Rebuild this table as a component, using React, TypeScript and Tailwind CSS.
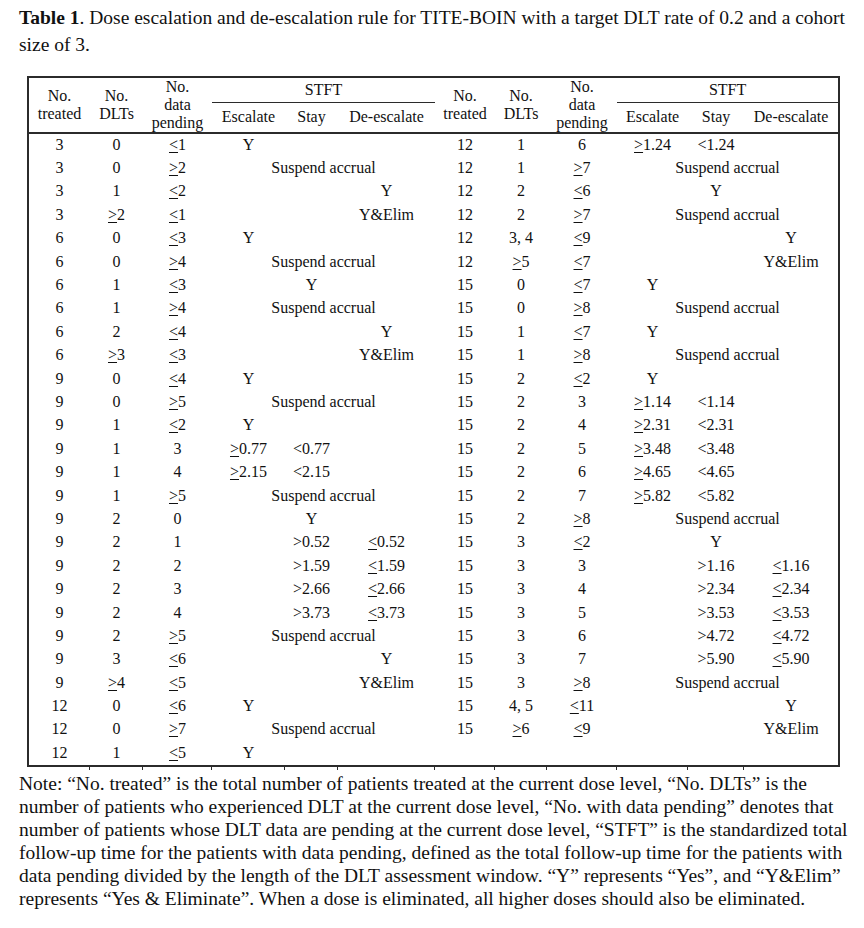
type Row = [string, string, string, string, string, string] | null;

// SA = "Suspend accrual" across the three STFT columns
const left: Row[] = [
  ["3", "0", "≤1", "Y", "", ""],
  ["3", "0", "≥2", "SA", "", ""],
  ["3", "1", "≤2", "", "", "Y"],
  ["3", "≥2", "≤1", "", "", "Y&Elim"],
  ["6", "0", "≤3", "Y", "", ""],
  ["6", "0", "≥4", "SA", "", ""],
  ["6", "1", "≤3", "", "Y", ""],
  ["6", "1", "≥4", "SA", "", ""],
  ["6", "2", "≤4", "", "", "Y"],
  ["6", "≥3", "≤3", "", "", "Y&Elim"],
  ["9", "0", "≤4", "Y", "", ""],
  ["9", "0", "≥5", "SA", "", ""],
  ["9", "1", "≤2", "Y", "", ""],
  ["9", "1", "3", "≥0.77", "<0.77", ""],
  ["9", "1", "4", "≥2.15", "<2.15", ""],
  ["9", "1", "≥5", "SA", "", ""],
  ["9", "2", "0", "", "Y", ""],
  ["9", "2", "1", "", ">0.52", "≤0.52"],
  ["9", "2", "2", "", ">1.59", "≤1.59"],
  ["9", "2", "3", "", ">2.66", "≤2.66"],
  ["9", "2", "4", "", ">3.73", "≤3.73"],
  ["9", "2", "≥5", "SA", "", ""],
  ["9", "3", "≤6", "", "", "Y"],
  ["9", "≥4", "≤5", "", "", "Y&Elim"],
  ["12", "0", "≤6", "Y", "", ""],
  ["12", "0", "≥7", "SA", "", ""],
  ["12", "1", "≤5", "Y", "", ""],
];

const right: Row[] = [
  ["12", "1", "6", "≥1.24", "<1.24", ""],
  ["12", "1", "≥7", "SA", "", ""],
  ["12", "2", "≤6", "", "Y", ""],
  ["12", "2", "≥7", "SA", "", ""],
  ["12", "3, 4", "≤9", "", "", "Y"],
  ["12", "≥5", "≤7", "", "", "Y&Elim"],
  ["15", "0", "≤7", "Y", "", ""],
  ["15", "0", "≥8", "SA", "", ""],
  ["15", "1", "≤7", "Y", "", ""],
  ["15", "1", "≥8", "SA", "", ""],
  ["15", "2", "≤2", "Y", "", ""],
  ["15", "2", "3", "≥1.14", "<1.14", ""],
  ["15", "2", "4", "≥2.31", "<2.31", ""],
  ["15", "2", "5", "≥3.48", "<3.48", ""],
  ["15", "2", "6", "≥4.65", "<4.65", ""],
  ["15", "2", "7", "≥5.82", "<5.82", ""],
  ["15", "2", "≥8", "SA", "", ""],
  ["15", "3", "≤2", "", "Y", ""],
  ["15", "3", "3", "", ">1.16", "≤1.16"],
  ["15", "3", "4", "", ">2.34", "≤2.34"],
  ["15", "3", "5", "", ">3.53", "≤3.53"],
  ["15", "3", "6", "", ">4.72", "≤4.72"],
  ["15", "3", "7", "", ">5.90", "≤5.90"],
  ["15", "3", "≥8", "SA", "", ""],
  ["15", "4, 5", "≤11", "", "", "Y"],
  ["15", "≥6", "≤9", "", "", "Y&Elim"],
  null,
];

const widths = [61, 53, 69, 73, 53, 97, 60, 52, 70, 71, 56, 94];

// ≤ / ≥ are typeset as an underlined < / >
const V = ({ t }: { t: string }) => {
  if (t.startsWith("≤") || t.startsWith("≥")) {
    return (
      <>
        <span className="underline decoration-1 underline-offset-[2px]">
          {t[0] === "≤" ? "<" : ">"}
        </span>
        {t.slice(1)}
      </>
    );
  }
  return <>{t}</>;
};

const half = (r: Row, k: string) => {
  if (!r) return [0, 1, 2, 3, 4, 5].map((i) => <td key={k + i} />);
  const cells = [
    <td key={k + 0}>{r[0]}</td>,
    <td key={k + 1}>
      <V t={r[1]} />
    </td>,
    <td key={k + 2}>
      <V t={r[2]} />
    </td>,
  ];
  if (r[3] === "SA") {
    cells.push(
      <td key={k + 3} colSpan={3}>
        Suspend accrual
      </td>
    );
  } else {
    cells.push(
      <td key={k + 3}>
        <V t={r[3]} />
      </td>,
      <td key={k + 4}>
        <V t={r[4]} />
      </td>,
      <td key={k + 5}>
        <V t={r[5]} />
      </td>
    );
  }
  return cells;
};

const HeadLeft = () => (
  <>
    <th rowSpan={2} className="font-normal leading-[18px]">
      No.
      <br />
      treated
    </th>
    <th rowSpan={2} className="font-normal leading-[18px]">
      No.
      <br />
      DLTs
    </th>
    <th rowSpan={2} className="font-normal leading-[18px]">
      No.
      <br />
      data
      <br />
      pending
    </th>
  </>
);

const App = () => {
  return (
    <div className="min-h-screen bg-white text-[#111] font-['Liberation_Serif','Times_New_Roman',serif] px-[19px] pt-[4px]">
      <p className="text-[19.5px] leading-[27px]">
        <span className="block whitespace-nowrap">
          <b>Table 1</b>. Dose escalation and de-escalation rule for TITE-BOIN with a target DLT rate of 0.2 and a
          cohort
        </span>
        <span className="block">size of 3.</span>
      </p>

      <div className="ml-2 mt-[18px] w-[813px]">
        <div className="border-2 border-[#2b2b2b]">
          <table className="w-[809px] table-fixed border-collapse text-[16px] text-center">
            <colgroup>
              {widths.map((w, i) => (
                <col key={i} style={{ width: w }} />
              ))}
            </colgroup>
            <thead>
              <tr className="h-[23px]">
                <HeadLeft />
                <th colSpan={3} className="font-normal leading-none border-b border-[#2b2b2b]">
                  STFT
                </th>
                <HeadLeft />
                <th colSpan={3} className="font-normal leading-none border-b border-[#2b2b2b]">
                  STFT
                </th>
              </tr>
              <tr className="h-[29px] border-b-2 border-[#2b2b2b]">
                <th className="font-normal leading-none">Escalate</th>
                <th className="font-normal leading-none">Stay</th>
                <th className="font-normal leading-none">De-escalate</th>
                <th className="font-normal leading-none">Escalate</th>
                <th className="font-normal leading-none">Stay</th>
                <th className="font-normal leading-none">De-escalate</th>
              </tr>
            </thead>
            <tbody>
              {left.map((r, i) => (
                <tr key={i} className="h-[23.4px] leading-none">
                  {half(r, "l")}
                  {half(right[i], "r")}
                </tr>
              ))}
            </tbody>
          </table>
        </div>
        <div className="flex h-[3px] pl-[2px]">
          {widths.slice(0, 11).map((w, i) => (
            <div key={i} className="border-r border-[#2b2b2b]" style={{ width: w }} />
          ))}
        </div>
      </div>

      <div className="mt-[2px] text-[19.5px] leading-[23px]">
        <p className="whitespace-nowrap">
          Note: “No. treated” is the total number of patients treated at the current dose level, “No. DLTs” is the
        </p>
        <p className="whitespace-nowrap">
          number of patients who experienced DLT at the current dose level, “No. with data pending” denotes that
        </p>
        <p className="whitespace-nowrap">
          number of patients whose DLT data are pending at the current dose level, “STFT” is the standardized total
        </p>
        <p className="whitespace-nowrap">
          follow-up time for the patients with data pending, defined as the total follow-up time for the patients with
        </p>
        <p className="whitespace-nowrap">
          data pending divided by the length of the DLT assessment window. “Y” represents “Yes”, and “Y&amp;Elim”
        </p>
        <p className="whitespace-nowrap">
          represents “Yes &amp; Eliminate”. When a dose is eliminated, all higher doses should also be eliminated.
        </p>
      </div>
    </div>
  );
};

export default App;
